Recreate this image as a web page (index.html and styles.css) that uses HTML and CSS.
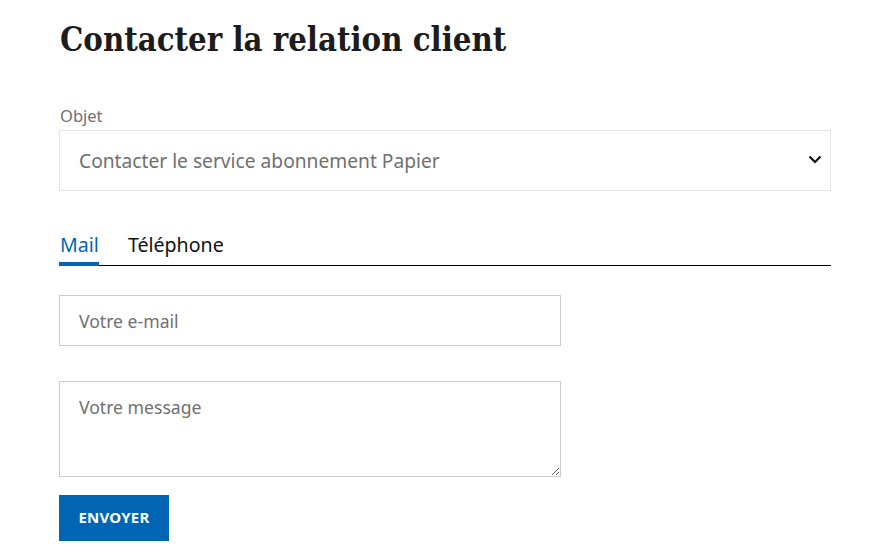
FILE: index.html
```html
<!DOCTYPE html>
<html lang="fr">
<head>
<meta charset="utf-8">
<title>Contacter la relation client</title>
<link rel="stylesheet" href="styles.css">
</head>
<body>
<main class="page">
  <h1 class="title">Contacter la relation client</h1>
  <form class="form">
    <label class="label" for="objet">Objet</label>
    <div class="select-wrap">
      <select id="objet" class="select">
        <option>Contacter le service abonnement Papier</option>
      </select>
      <svg class="chevron" width="14" height="9" viewBox="0 0 14 9" aria-hidden="true"><path d="M1.5 1.5 L7 7 L12.5 1.5" fill="none" stroke="#111" stroke-width="2.2"/></svg>
    </div>
    <div class="tabs">
      <span class="tab active">Mail</span>
      <span class="tab">Téléphone</span>
    </div>
    <input class="field email" type="email" placeholder="Votre e-mail">
    <textarea class="field message" placeholder="Votre message"></textarea>
    <button class="btn" type="button">ENVOYER</button>
  </form>
</main>
</body>
</html>
```
FILE: styles.css
```css
* { box-sizing: border-box; }
html, body { margin: 0; background: #fff; }
body { font-family: "Noto Sans", "Open Sans", sans-serif; color: #111; }
.page { width: 772px; margin-left: 59px; padding-top: 18px; }
.title {
  font-family: "DejaVu Serif Condensed", "DejaVu Serif", serif;
  font-weight: bold;
  font-size: 32.6px;
  line-height: 44px;
  margin: 0 0 0 1px;
  color: #1c1c1c;
}
.form { display: flex; flex-direction: column; align-items: flex-start; }
.label { font-size: 16.5px; line-height: 20px; color: #707070; margin: 44px 0 4px 1px; }
.select-wrap { position: relative; width: 772px; }
.select {
  appearance: none; -webkit-appearance: none;
  width: 100%; height: 61px;
  border: 1px solid #e5e5e5; border-radius: 0; background: #fff;
  font-family: inherit; font-size: 19.2px; color: #707070;
  padding: 0 19px; margin: 0;
}
.chevron { position: absolute; right: 9px; top: 25px; }
.tabs {
  display: flex; gap: 28px; width: 772px;
  border-bottom: 1px solid #000; margin-top: 40px;
}
.tab { font-size: 19.6px; line-height: 24px; padding: 2px 0 5px 1px; color: #111; margin-bottom: -1px; border-bottom: 4px solid transparent; }
.tab.active { color: #0066b3; border-bottom-color: #0066b3; }
.field {
  width: 502px; border: 1px solid #cccccc; border-radius: 0; background: #fff;
  font-family: inherit; font-size: 17.6px; color: #333; margin: 0; padding: 0 19px;
}
.field::placeholder { color: #707070; }
.email { height: 51px; margin-top: 29px; }
.message { height: 96px; margin-top: 35px; padding-top: 13px; resize: vertical; }
.btn {
  margin-top: 18px; width: 110px; height: 46px; border: 0; border-radius: 0;
  background: #0066b3; color: #fff; font-family: inherit; font-weight: bold;
  font-size: 15px; letter-spacing: 0.2px; cursor: pointer; padding: 0 0 3px;
}
```
